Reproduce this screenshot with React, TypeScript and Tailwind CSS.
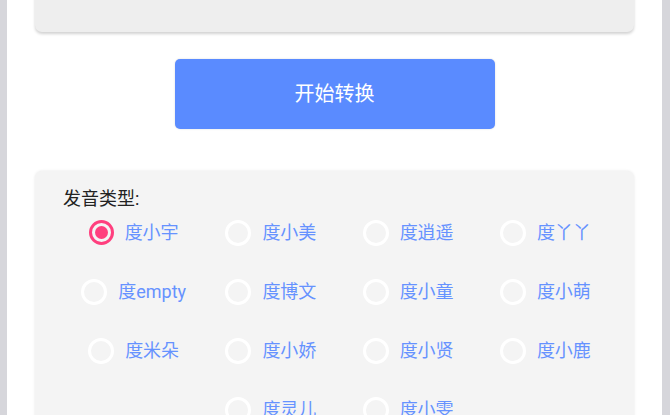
const voices = [
  "度小宇",
  "度小美",
  "度逍遥",
  "度丫丫",
  "度empty",
  "度博文",
  "度小童",
  "度小萌",
  "度米朵",
  "度小娇",
  "度小贤",
  "度小鹿",
  "度灵儿",
  "度小雯",
];

function Radio({ label, checked }: { label: string; checked?: boolean }) {
  return (
    <div className="w-1/4 h-[59px] flex items-center justify-center gap-[11px]">
      {checked ? (
        <span className="w-[25px] h-[25px] rounded-full border-[3px] border-[#ff3f7e] flex items-center justify-center">
          <span className="w-[13px] h-[13px] rounded-full bg-[#ff3f7e]" />
        </span>
      ) : (
        <span className="w-[26px] h-[26px] rounded-full border-[3px] border-white" />
      )}
      <span className="text-[18px] leading-[22px] text-[#6692ff]">{label}</span>
    </div>
  );
}

export default function App() {
  return (
    <div
      className="w-[670px] h-[415px] overflow-hidden flex bg-[#d6d6db]"
      style={{ fontFamily: 'Roboto, "Noto Sans CJK SC", sans-serif' }}
    >
      <div className="ml-[7px] w-[655px] h-full shrink-0 bg-white px-[28px] flex flex-col">
        <div className="shrink-0 -mt-[50px] h-[82px] rounded-b-[7px] bg-[#eeeeee] shadow-[0_2px_3px_rgba(0,0,0,0.18)]" />

        <button className="shrink-0 mt-[27px] self-center w-[320px] h-[70px] rounded-[5px] bg-[#5a8bff] text-white text-[20px] shadow-[0_0_2px_rgba(0,0,0,0.15)]">
          开始转换
        </button>

        <div className="shrink-0 mt-[42px] rounded-[7px] bg-[#f4f4f4] shadow-[0_0_3px_rgba(0,0,0,0.1)] pl-[30px] pr-[20px] pt-[17px] pb-[20px]">
          <div className="-ml-[2px] text-[18px] leading-[22px] text-[#222222]">发音类型:</div>
          <div className="-mt-[7px] flex flex-wrap justify-center">
            {voices.map((v, i) => (
              <Radio key={v} label={v} checked={i === 0} />
            ))}
          </div>
        </div>
      </div>
      <div className="flex-1 bg-[#d6d6db]" />
    </div>
  );
}
